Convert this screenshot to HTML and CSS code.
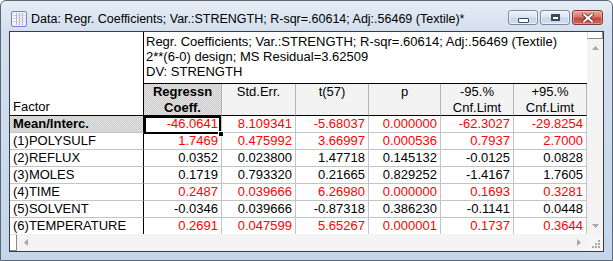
FILE: index.html
```html
<!DOCTYPE html>
<html>
<head>
<meta charset="utf-8">
<link rel="stylesheet" href="styles.css">
</head>
<body>
<div class="window">
  <div class="titlebar">
    <svg class="appicon" width="16" height="16" viewBox="0 0 16 16">
      <rect x="0.5" y="0.5" width="15" height="15" rx="1.5" fill="#eeeefa" stroke="#7d7de0"/>
      <rect x="2" y="2" width="12" height="12" fill="#f4f4fb"/>
      <path d="M5.5 2v12M8.5 2v12M11.5 2v12" stroke="#b0b0c8" stroke-width="1"/>
      <path d="M2 4.5h12M2 7.5h12M2 10.5h12" stroke="#d0d0e0" stroke-width="1"/>
    </svg>
    <span class="title">Data: Regr. Coefficients; Var.:STRENGTH; R-sqr=.60614; Adj:.56469 (Textile)*</span>
    <div class="caption-buttons">
      <div class="cbtn"><span class="glyph-min"></span></div>
      <div class="cbtn"><span class="glyph-max"></span></div>
      <div class="cbtn close">
        <svg width="12" height="10" viewBox="0 0 12 10">
          <path d="M2 1.5l8 7M10 1.5l-8 7" stroke="#5a2a2a" stroke-width="3.6" stroke-linecap="square"/>
          <path d="M2 1.5l8 7M10 1.5l-8 7" stroke="#ffffff" stroke-width="2" stroke-linecap="square"/>
        </svg>
      </div>
    </div>
  </div>
  <div class="content">
    <div class="sheet">
      <div class="grid">
        <div class="factor-head">Factor</div>
        <div class="info">Regr. Coefficients; Var.:STRENGTH; R-sqr=.60614; Adj:.56469 (Textile)<br>2**(6-0) design; MS Residual=3.62509<br>DV: STRENGTH</div>
        <div class="colhead sel">Regressn<br>Coeff.</div>
        <div class="colhead">Std.Err.</div>
        <div class="colhead">t(57)</div>
        <div class="colhead">p</div>
        <div class="colhead">-95.%<br>Cnf.Limt</div>
        <div class="colhead">+95.%<br>Cnf.Limt</div>

        <div class="rowhead sel">Mean/Interc.</div>
        <div class="cell red current">-46.0641</div>
        <div class="cell red">8.109341</div>
        <div class="cell red">-5.68037</div>
        <div class="cell red">0.000000</div>
        <div class="cell red">-62.3027</div>
        <div class="cell red">-29.8254</div>

        <div class="rowhead">(1)POLYSULF</div>
        <div class="cell red">1.7469</div>
        <div class="cell red">0.475992</div>
        <div class="cell red">3.66997</div>
        <div class="cell red">0.000536</div>
        <div class="cell red">0.7937</div>
        <div class="cell red">2.7000</div>

        <div class="rowhead">(2)REFLUX</div>
        <div class="cell">0.0352</div>
        <div class="cell">0.023800</div>
        <div class="cell">1.47718</div>
        <div class="cell">0.145132</div>
        <div class="cell">-0.0125</div>
        <div class="cell">0.0828</div>

        <div class="rowhead">(3)MOLES</div>
        <div class="cell">0.1719</div>
        <div class="cell">0.793320</div>
        <div class="cell">0.21665</div>
        <div class="cell">0.829252</div>
        <div class="cell">-1.4167</div>
        <div class="cell">1.7605</div>

        <div class="rowhead">(4)TIME</div>
        <div class="cell red">0.2487</div>
        <div class="cell red">0.039666</div>
        <div class="cell red">6.26980</div>
        <div class="cell red">0.000000</div>
        <div class="cell red">0.1693</div>
        <div class="cell red">0.3281</div>

        <div class="rowhead">(5)SOLVENT</div>
        <div class="cell">-0.0346</div>
        <div class="cell">0.039666</div>
        <div class="cell">-0.87318</div>
        <div class="cell">0.386230</div>
        <div class="cell">-0.1141</div>
        <div class="cell">0.0448</div>

        <div class="rowhead">(6)TEMPERATURE</div>
        <div class="cell red">0.2691</div>
        <div class="cell red">0.047599</div>
        <div class="cell red">5.65267</div>
        <div class="cell red">0.000001</div>
        <div class="cell red">0.1737</div>
        <div class="cell red">0.3644</div>
      </div>
    </div>
    <div class="vscroll">
      <div class="vsplit"></div>
      <div class="sbtn">
        <svg width="7" height="4" viewBox="0 0 7 4"><path d="M3.5 0L7 4H0z" fill="#a6a6a6"/></svg>
      </div>
      <div class="track"></div>
      <div class="sbtn">
        <svg width="7" height="4" viewBox="0 0 7 4"><path d="M0 0h7L3.5 4z" fill="#a6a6a6"/></svg>
      </div>
    </div>
    <div class="hscroll">
      <div class="hsplit"></div>
      <div class="sbtn h">
        <svg width="4" height="7" viewBox="0 0 4 7"><path d="M0 3.5L4 0v7z" fill="#a6a6a6"/></svg>
      </div>
      <div class="track"></div>
      <div class="sbtn h">
        <svg width="4" height="7" viewBox="0 0 4 7"><path d="M0 0l4 3.5L0 7z" fill="#a6a6a6"/></svg>
      </div>
    </div>
    <div class="grip">
      <svg width="16" height="17" viewBox="0 0 16 17">
        <g fill="#a8a8a8">
          <rect x="11" y="6" width="2" height="2"/>
          <rect x="8" y="9" width="2" height="2"/><rect x="11" y="9" width="2" height="2"/>
          <rect x="5" y="12" width="2" height="2"/><rect x="8" y="12" width="2" height="2"/><rect x="11" y="12" width="2" height="2"/>
        </g>
      </svg>
    </div>
  </div>
</div>
</body>
</html>
```

FILE: styles.css
```css
html, body {
  margin: 0;
  padding: 0;
  background: #ffffff;
}

body {
  font-family: "Liberation Sans", Arial, sans-serif;
  font-size: 13px;
  color: #000;
}

.window {
  width: 613px;
  height: 261px;
  box-sizing: border-box;
  border: 1px solid #5b6779;
  border-radius: 6px 6px 0 0;
  background: linear-gradient(#e6edf5 0, #d3dfee 30px, #c3d6ec 100%);
  padding: 0 8px 8px;
  display: flex;
  flex-direction: column;
}

.titlebar {
  height: 30px;
  display: flex;
  align-items: flex-start;
  padding-left: 2px;
}

.appicon {
  margin-top: 10px;
  flex: none;
}

.title {
  margin-left: 4px;
  margin-top: 11px;
  font-size: 12.5px;
  line-height: 15px;
  color: #000;
  white-space: nowrap;
}

.caption-buttons {
  margin-left: auto;
  margin-right: 1px;
  margin-top: 9px;
  display: flex;
  gap: 2px;
}

.cbtn {
  width: 30px;
  height: 15px;
  box-sizing: border-box;
  border: 1px solid #7a8aa2;
  border-radius: 3px;
  background: linear-gradient(#eef3fa 0, #dbe5f2 45%, #c8d6e9 55%, #d2deee 100%);
  display: flex;
  align-items: center;
  justify-content: center;
  box-shadow: inset 0 0 0 1px rgba(255, 255, 255, 0.6);
}

.cbtn.close {
  width: 31px;
  border-color: #7a3b36;
  background: linear-gradient(#e9a99d 0, #d9776a 45%, #c4463a 55%, #d1685c 100%);
  box-shadow: inset 0 0 0 1px rgba(255, 200, 190, 0.5);
}

.glyph-min {
  width: 9px;
  height: 3px;
  margin-top: 5px;
  background: #fff;
  border: 1px solid #3d4a5c;
  border-radius: 1px;
}

.glyph-max {
  width: 7px;
  height: 4px;
  background: #fff;
  border: 1px solid #3d4a5c;
  border-top-width: 2px;
  box-shadow: inset 0 0 0 1px #3d4a5c;
  background-clip: padding-box;
}

.content {
  box-sizing: border-box;
  height: 221px;
  border: 1px solid #3c3c3c;
  background: #fff;
  display: grid;
  grid-template-columns: 577px 16px;
  grid-template-rows: 202px 17px;
}

.sheet {
  overflow: hidden;
}

.grid {
  display: grid;
  grid-template-columns: 134px 78px 74px 73px 72px 73px 73px;
  grid-template-rows: 52px 32px repeat(7, 17px);
}

.grid > div {
  box-sizing: border-box;
  border-right: 1px solid #c4c4c4;
  border-bottom: 1px solid #c4c4c4;
  line-height: 16px;
  white-space: nowrap;
  overflow: hidden;
}

.grid > .factor-head {
  grid-row: 1 / 3;
  border-right-color: #000;
  border-bottom-color: #000;
  display: flex;
  align-items: flex-end;
  padding-left: 3px;
}

.grid > .info {
  grid-column: 2 / 8;
  border-right: none;
  border-bottom-color: #000;
  padding: 2px 0 0 2px;
  line-height: 15px;
}

.grid > .colhead {
  border-bottom-color: #000;
  border-right-color: #b4b4b4;
  text-align: center;
  background-color: #fbfbfb;
  background-image: repeating-conic-gradient(#ebebeb 0 25%, #fbfbfb 0 50%);
  background-size: 2px 2px;
}

.grid > .colhead.sel {
  font-weight: bold;
  background-image: repeating-conic-gradient(#cacaca 0 25%, #e4e4e4 0 50%);
}

.grid > .rowhead {
  border-right-color: #000;
  padding-left: 3px;
}

.grid > .rowhead.sel {
  font-weight: bold;
  background-image: repeating-conic-gradient(#cacaca 0 25%, #e4e4e4 0 50%);
  background-size: 2px 2px;
}

.grid > .cell {
  text-align: right;
  padding-right: 3px;
}

.grid > .cell.red {
  color: #ff0000;
}

.grid > .cell.current {
  position: relative;
  overflow: visible;
}

.grid > .cell.current::after {
  content: "";
  position: absolute;
  left: 0;
  top: 0;
  width: 77px;
  height: 18px;
  box-sizing: border-box;
  border: 2px solid #000;
  z-index: 2;
}

.grid > .cell.current::before {
  content: "";
  position: absolute;
  left: 74px;
  top: 15px;
  width: 4px;
  height: 4px;
  background: #000;
  border: 1px solid #fff;
  z-index: 3;
}

.vscroll, .hscroll {
  background-color: #fafafa;
  background-image: repeating-conic-gradient(#ececec 0 25%, #fcfcfc 0 50%);
  background-size: 2px 2px;
  display: flex;
}

.vscroll {
  flex-direction: column;
}

.vsplit {
  height: 7px;
  box-sizing: border-box;
  background: #fff;
  border-right: 1px solid #8a8a8a;
  border-bottom: 1px solid #8a8a8a;
  border-left: 1px solid #e0e0e0;
}

.hsplit {
  width: 7px;
  box-sizing: border-box;
  background: #fff;
  border-right: 1px solid #8a8a8a;
  border-bottom: 1px solid #8a8a8a;
  border-top: 1px solid #e0e0e0;
}

.sbtn {
  height: 17px;
  display: flex;
  align-items: center;
  justify-content: center;
  flex: none;
}

.sbtn.h {
  width: 17px;
  height: auto;
}

.track {
  flex: 1;
}

.grip {
  background: #f6f6f6;
  display: flex;
}
```
